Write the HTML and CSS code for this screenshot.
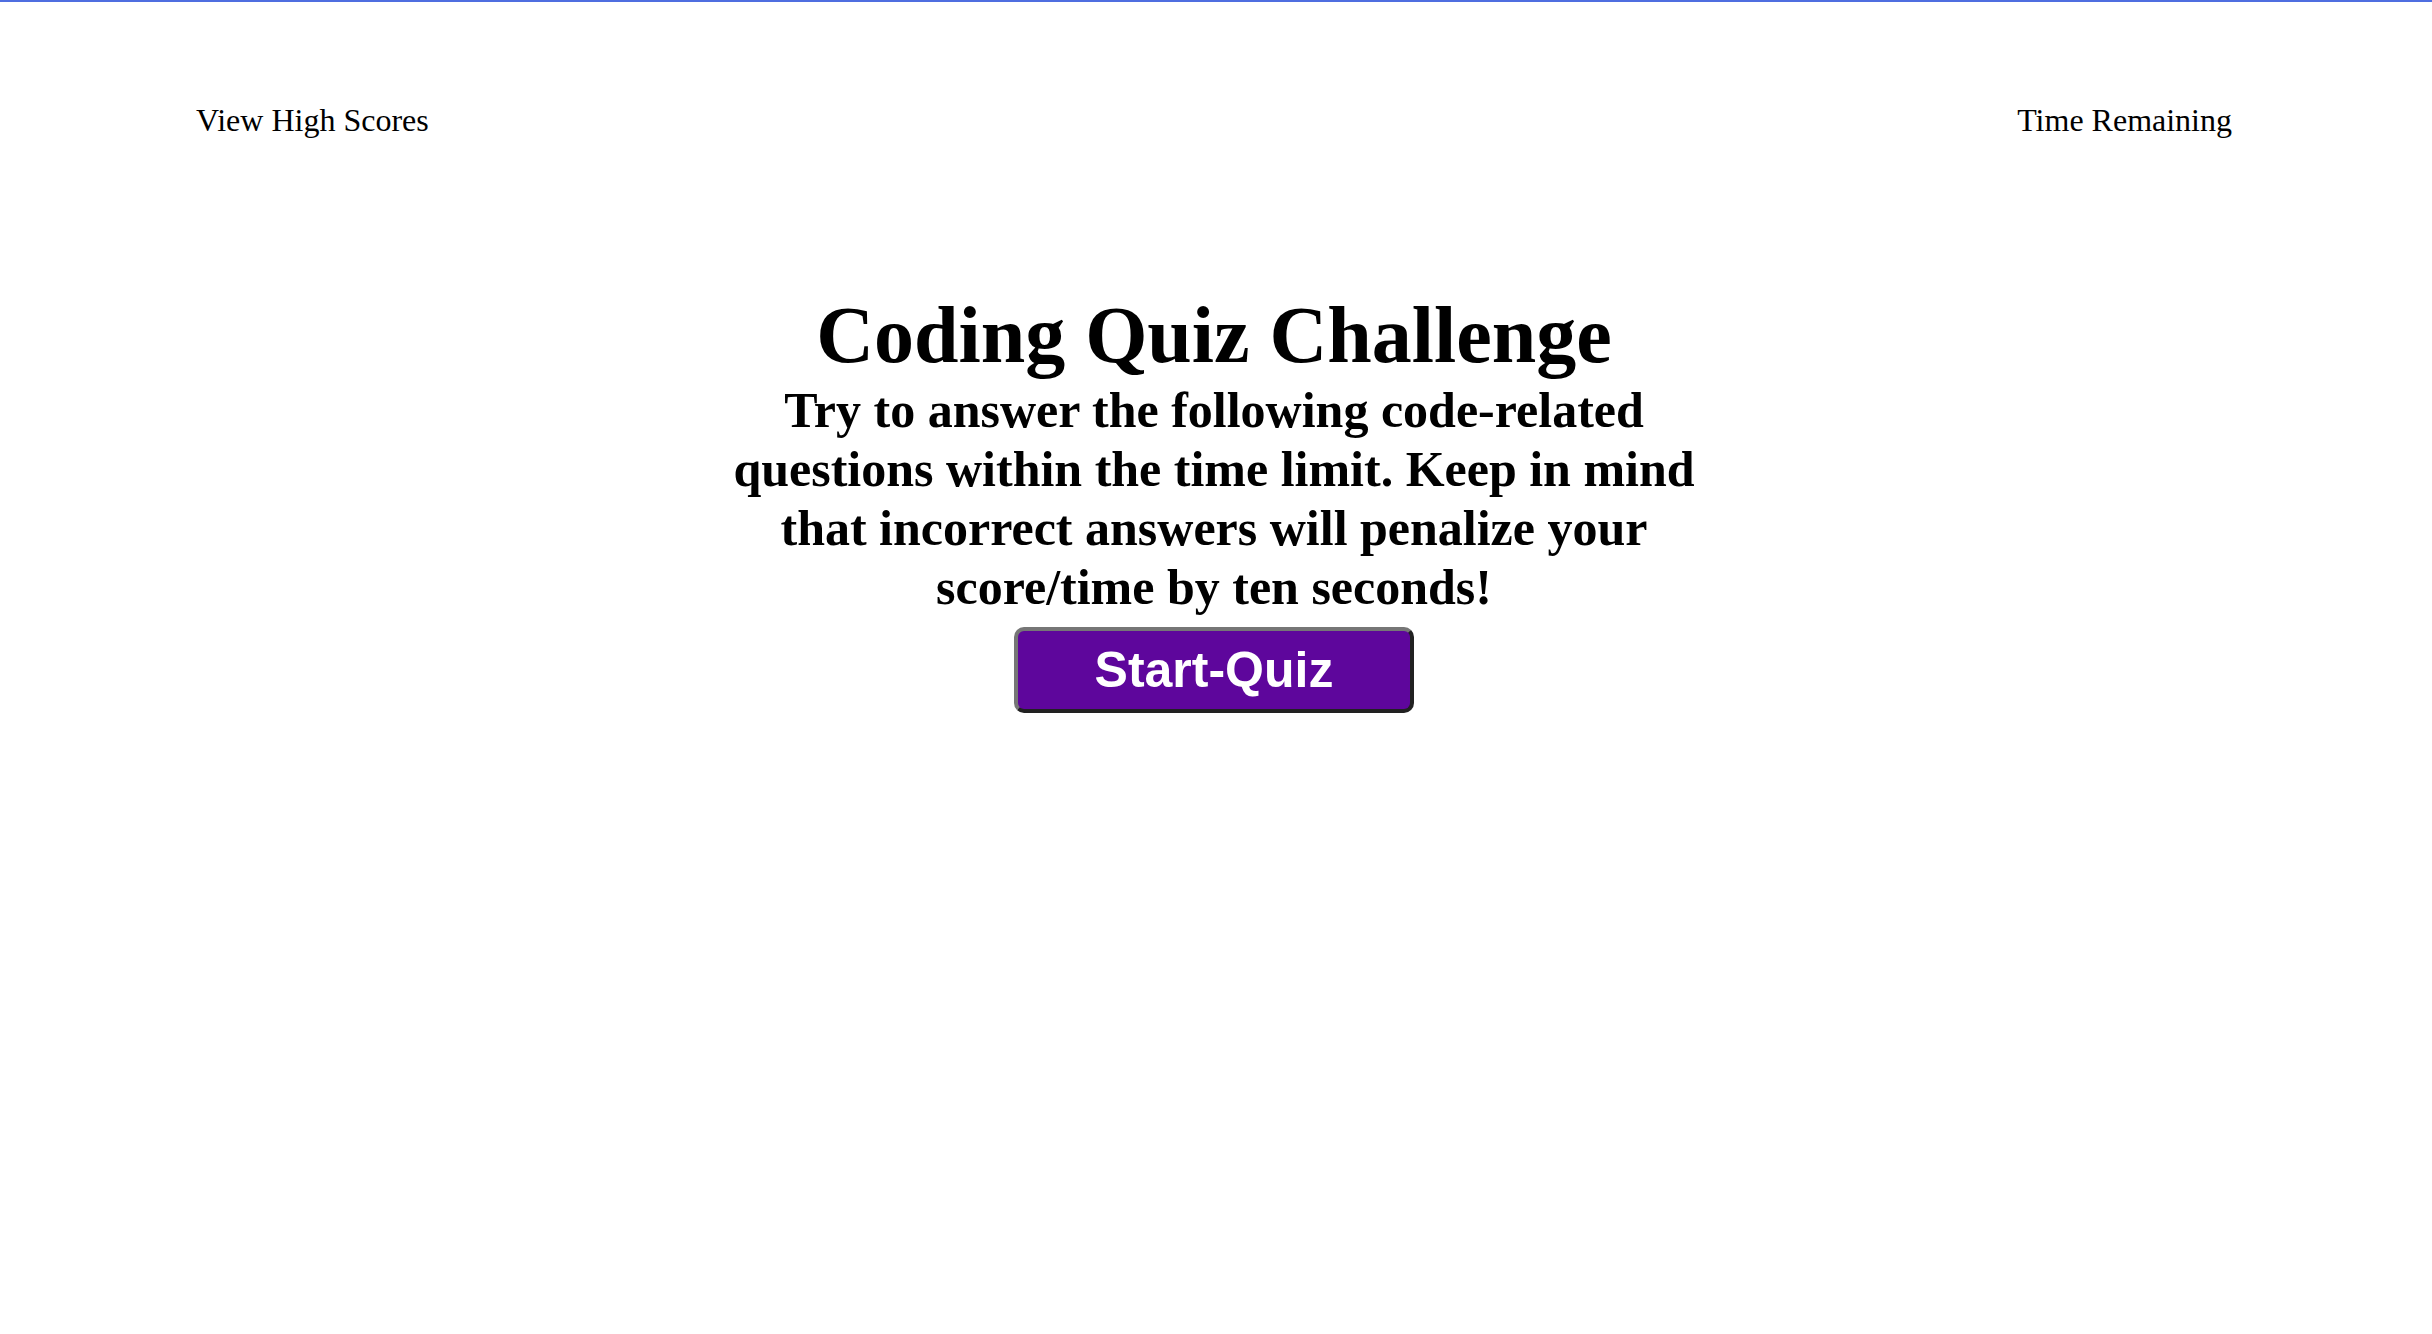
FILE: index.html
```
<!DOCTYPE html>
<html lang="en">
<head>
<meta charset="utf-8">
<title>Coding Quiz Challenge</title>
<link rel="stylesheet" href="styles.css">
</head>
<body>
<header class="topbar">
<a class="scores" href="#scores">View High Scores</a>
<p class="timer">Time Remaining</p>
</header>
<main class="intro">
<h1 class="title">Coding Quiz Challenge</h1>
<h2 class="lead">Try to answer the following code-related questions within the time limit. Keep in mind that incorrect answers will penalize your score/time by ten seconds!</h2>
<button class="start" type="button">Start-Quiz</button>
</main>
</body>
</html>
```

FILE: styles.css
```
* {
  box-sizing: border-box;
  margin: 0;
  padding: 0;
}

body {
  padding-right: 4px;
  border-top: 2px solid #4f6ee0;
  background: #fff;
  color: #000;
  font-family: "Liberation Serif", "Times New Roman", serif;
}

.topbar {
  display: flex;
  justify-content: space-between;
  padding: 100px 196px 0;
  font-size: 32px;
  line-height: 36px;
}

.scores {
  color: inherit;
  text-decoration: none;
}

.intro {
  display: flex;
  flex-direction: column;
  align-items: center;
  width: 41%;
  margin: 151px auto 0;
  text-align: center;
}

.title {
  font-size: 80px;
  line-height: 92px;
}

.lead {
  font-size: 50px;
  line-height: 59px;
}

.start {
  width: 400px;
  margin-top: 10px;
  padding: 8px;
  border: 4px solid;
  border-color: #767676 #212121 #212121 #767676;
  border-radius: 10px;
  background: #5e069c;
  color: #fff;
  font: bold 50px/62px "Liberation Sans", Arial, sans-serif;
}
```
